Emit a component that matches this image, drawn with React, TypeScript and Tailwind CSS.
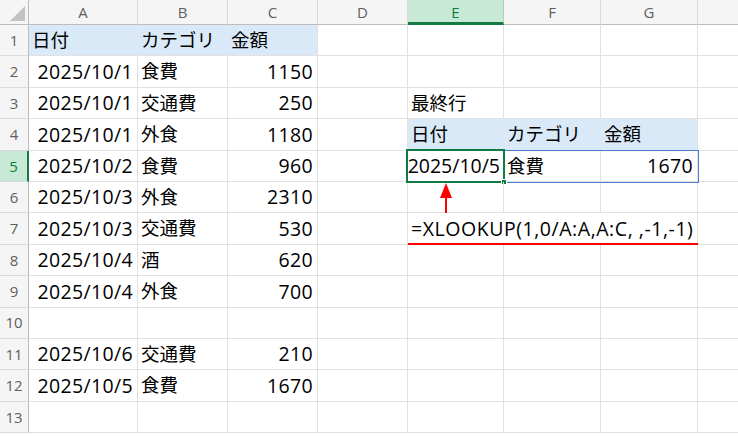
import React from "react";

type Cell = { v: string; align?: "left" | "right"; fill?: boolean; tight?: boolean; wide?: boolean };

const columns = ["A", "B", "C", "D", "E", "F", "G", ""];
const colWidths = [109, 90, 90, 90, 96, 97, 97, 69];

const dataRows: Record<number, Record<string, Cell>> = {
  1: {
    A: { v: "日付", fill: true },
    B: { v: "カテゴリ", fill: true },
    C: { v: "金額", fill: true },
  },
  2: { A: { v: "2025/10/1", align: "right" }, B: { v: "食費" }, C: { v: "1150", align: "right" } },
  3: {
    A: { v: "2025/10/1", align: "right" },
    B: { v: "交通費" },
    C: { v: "250", align: "right" },
    E: { v: "最終行" },
  },
  4: {
    A: { v: "2025/10/1", align: "right" },
    B: { v: "外食" },
    C: { v: "1180", align: "right" },
    E: { v: "日付", fill: true },
    F: { v: "カテゴリ", fill: true },
    G: { v: "金額", fill: true },
  },
  5: {
    A: { v: "2025/10/2", align: "right" },
    B: { v: "食費" },
    C: { v: "960", align: "right" },
    E: { v: "2025/10/5", align: "right", tight: true },
    F: { v: "食費" },
    G: { v: "1670", align: "right" },
  },
  6: { A: { v: "2025/10/3", align: "right" }, B: { v: "外食" }, C: { v: "2310", align: "right" } },
  7: {
    A: { v: "2025/10/3", align: "right" },
    B: { v: "交通費" },
    C: { v: "530", align: "right" },
    E: { v: "=XLOOKUP(1,0/A:A,A:C, ,-1,-1)", wide: true },
  },
  8: { A: { v: "2025/10/4", align: "right" }, B: { v: "酒" }, C: { v: "620", align: "right" } },
  9: { A: { v: "2025/10/4", align: "right" }, B: { v: "外食" }, C: { v: "700", align: "right" } },
  10: {},
  11: { A: { v: "2025/10/6", align: "right" }, B: { v: "交通費" }, C: { v: "210", align: "right" } },
  12: { A: { v: "2025/10/5", align: "right" }, B: { v: "食費" }, C: { v: "1670", align: "right" } },
  13: {},
};

const cellFont = { fontFamily: '"Open Sans", "Noto Sans CJK JP", sans-serif' };

// extra marks drawn on top of a cell (selection, spill border, annotations)
function CellOverlay({ row, col }: { row: number; col: string }) {
  if (col !== "E") return null;
  if (row === 5) {
    return (
      <>
        <div className="pointer-events-none absolute -left-px -top-px h-[33px] w-[292px] border border-[#4a7fd0]" />
        <div className="pointer-events-none absolute -left-[2px] -top-[2px] bottom-[-2px] right-[-2px] border-2 border-[#107c41]" />
        <div className="absolute -bottom-[4px] -right-[4px] h-[6px] w-[6px] border border-white bg-[#107c41]" />
      </>
    );
  }
  if (row === 6) {
    // red arrow pointing up at the result
    return (
      <div className="absolute left-[32px] top-[1px] flex flex-col items-center">
        <div className="h-0 w-0 border-x-[6px] border-b-[15px] border-x-transparent border-b-[#ff0000]" />
        <div className="h-[15px] w-[2px] bg-[#ff0000]" />
      </div>
    );
  }
  if (row === 7) {
    return <div className="absolute -bottom-[1px] left-0 h-[2px] w-[290px] bg-[#ff0000]" />;
  }
  return null;
}

const isLatin = (s: string) => /^[\x20-\x7e]*$/.test(s);

export default function App() {
  const rows = Array.from({ length: 13 }, (_, i) => i + 1);

  return (
    <div className="h-[438px] w-[738px] overflow-hidden bg-white text-black">
      {/* column headers */}
      <div className="flex h-[25px] bg-[#f5f5f5] font-['Open_Sans',sans-serif] text-[15px] text-[#5f5f5f]">
        <div className="relative w-[29px] shrink-0 border-b border-r border-[#bdbdbd]">
          <div className="absolute bottom-[3px] right-[3px] h-0 w-0 border-b-[15px] border-l-[15px] border-b-[#c2c2c2] border-l-transparent" />
        </div>
        {columns.map((c, i) => (
          <div
            key={i}
            style={{ width: colWidths[i] }}
            className={
              c === "E"
                ? "flex shrink-0 items-center justify-center border-b-[3px] border-r border-b-[#107c41] border-r-[#9fd6b8] bg-[#c8e9d5] pt-[2px] text-[#107c41]"
                : "flex shrink-0 items-center justify-center border-b border-r border-b-[#bdbdbd] border-r-[#dadada]"
            }
          >
            {c}
          </div>
        ))}
      </div>

      {rows.map((r) => {
        const row = dataRows[r] || {};
        return (
          <div key={r} className="flex h-[31.4px]">
            <div
              className={
                r === 5
                  ? "flex w-[29px] shrink-0 items-center justify-center border-b border-r-2 border-b-[#dadada] border-r-[#107c41] bg-[#c8e9d5] font-['Open_Sans',sans-serif] text-[15px] text-[#107c41]"
                  : "flex w-[29px] shrink-0 items-center justify-center border-b border-r border-b-[#dadada] border-r-[#bdbdbd] bg-[#f5f5f5] font-['Open_Sans',sans-serif] text-[15px] text-[#5f5f5f]"
              }
            >
              {r}
            </div>
            {columns.map((c, i) => {
              const cell = row[c];
              const hideRight =
                (cell?.fill && row[columns[i + 1]]?.fill) ||
                (r === 7 && (c === "E" || c === "F"));
              const onTop = c === "E" && (r === 5 || r === 6 || r === 7);
              const latin = cell ? isLatin(cell.v) : false;
              let size = "text-[18.5px]";
              if (latin) size = "text-[19.5px] tracking-[0.35px]";
              if (cell?.tight) size = "text-[19.5px] tracking-normal";
              if (cell?.wide) size = "text-[19.5px] tracking-[0.55px]";
              return (
                <div
                  key={i}
                  style={{ width: colWidths[i], ...cellFont }}
                  className={[
                    "relative flex shrink-0 items-center whitespace-nowrap border-b border-r border-[#e1e1e1] leading-none",
                    size,
                    cell?.fill ? "bg-[#dae9f8]" : "",
                    hideRight ? "border-r-transparent" : "",
                    cell?.align === "right"
                      ? cell?.tight
                        ? "justify-end pr-[3px]"
                        : "justify-end pr-[4px]"
                      : "justify-start pl-[3px]",
                    onTop ? "z-10 overflow-visible" : "overflow-hidden",
                  ].join(" ")}
                >
                  {cell?.v}
                  <CellOverlay row={r} col={c} />
                </div>
              );
            })}
          </div>
        );
      })}
    </div>
  );
}
